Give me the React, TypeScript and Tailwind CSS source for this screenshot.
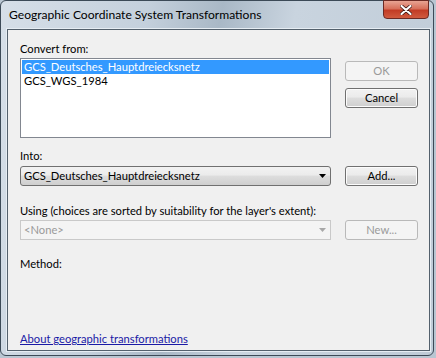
import { ReactNode } from "react";

const font = { fontFamily: 'Lato, "Noto Sans", sans-serif' };

function Btn({ children, disabled }: { children: ReactNode; disabled?: boolean }) {
  return (
    <button
      disabled={disabled}
      className={
        disabled
          ? "flex h-[20px] w-[73px] items-center justify-center rounded-[3px] border border-[#b9b9b9] bg-[#f4f4f4] text-[11.2px] leading-none text-[#9a9a9a]"
          : "flex h-[20px] w-[73px] items-center justify-center rounded-[3px] border border-[#707070] bg-[linear-gradient(#f2f2f2_0%,#ebebeb_45%,#dddddd_50%,#cfcfcf_100%)] text-[11.2px] leading-none text-black shadow-[inset_0_0_0_1px_#fcfcfc]"
      }
    >
      {children}
    </button>
  );
}

function Label({ children }: { children: ReactNode }) {
  return <div className="h-[15px] text-[11.2px] leading-[15px] text-black">{children}</div>;
}

export default function App() {
  return (
    <div className="h-[358px] w-[436px] overflow-hidden bg-[#b9c6d2]" style={font}>
      <div className="relative h-[356px] w-[434px] rounded-[6px] border border-[#3c4a57] bg-[linear-gradient(100deg,#d6dfe8_0%,#c4d0dc_30%,#a9b8c6_45%,#c9d4df_60%,#bfcbd7_100%)] px-[6px] pb-[5px] pt-[28px]">
        <div className="absolute left-[8px] top-[6px] text-[12.1px] leading-[16px] text-black">
          Geographic Coordinate System Transformations
        </div>
        <div className="absolute right-[4px] top-[-1px] flex h-[19px] w-[46px] items-center justify-center rounded-b-[4px] border border-[#6b2a24] bg-[linear-gradient(#e8a493_0%,#d7705b_45%,#c23c25_55%,#d05a3e_100%)]">
          <svg width="12" height="10" viewBox="0 0 12 10">
            <path d="M1.5 1 L10.5 9 M10.5 1 L1.5 9" stroke="#3a1410" strokeWidth="3.6" strokeLinecap="round" />
            <path d="M1.5 1 L10.5 9 M10.5 1 L1.5 9" stroke="#ffffff" strokeWidth="2.2" strokeLinecap="round" />
          </svg>
        </div>

        <div className="flex h-[322px] w-[423px] flex-col border border-[#53606c] bg-[#f0f0f0] pl-[12px] pt-[11px] shadow-[0_0_0_1px_#e6edf3]">
          <Label>Convert from:</Label>
          <div className="mt-[2px] flex gap-[14px]">
            <div className="h-[80px] w-[311px] border border-[#828790] bg-white p-[1px] text-[11.2px]">
              <div className="h-[14px] bg-[#3399ff] px-[2px] leading-[14px] text-white">GCS_Deutsches_Hauptdreiecksnetz</div>
              <div className="h-[14px] px-[2px] leading-[14px] text-black">GCS_WGS_1984</div>
            </div>
            <div className="mt-[3px] flex flex-col gap-[7px]">
              <Btn disabled>OK</Btn>
              <Btn>Cancel</Btn>
            </div>
          </div>

          <div className="mt-[10px]">
            <Label>Into:</Label>
          </div>
          <div className="mt-[3px] flex gap-[14px]">
            <div className="flex h-[20px] w-[311px] items-center justify-between rounded-[3px] border border-[#707070] bg-[linear-gradient(#f2f2f2_0%,#ebebeb_45%,#dddddd_50%,#cfcfcf_100%)] pl-[3px] pr-[4px] text-[11.2px] text-black">
              <span>GCS_Deutsches_Hauptdreiecksnetz</span>
              <svg width="7" height="4" viewBox="0 0 7 4">
                <path d="M0 0 H7 L3.5 4 Z" fill="#000" />
              </svg>
            </div>
            <Btn>Add...</Btn>
          </div>

          <div className="mt-[17px]">
            <Label>Using (choices are sorted by suitability for the layer's extent):</Label>
          </div>
          <div className="mt-[2px] flex gap-[14px]">
            <div className="flex h-[20px] w-[311px] items-center justify-between border border-[#c9c9c9] bg-[#f4f4f4] pl-[3px] pr-[4px] text-[11.2px] text-[#9a9a9a]">
              <span>&lt;None&gt;</span>
              <svg width="7" height="4" viewBox="0 0 7 4">
                <path d="M0 0 H7 L3.5 4 Z" fill="#a8a8a8" />
              </svg>
            </div>
            <Btn disabled>New...</Btn>
          </div>

          <div className="mt-[16px]">
            <Label>Method:</Label>
          </div>

          <div className="mt-[54px]">
            <a href="#" className="text-[11.2px] leading-[15px] text-[#1a1aa6] underline">
              About geographic transformations
            </a>
          </div>
        </div>
      </div>
    </div>
  );
}
